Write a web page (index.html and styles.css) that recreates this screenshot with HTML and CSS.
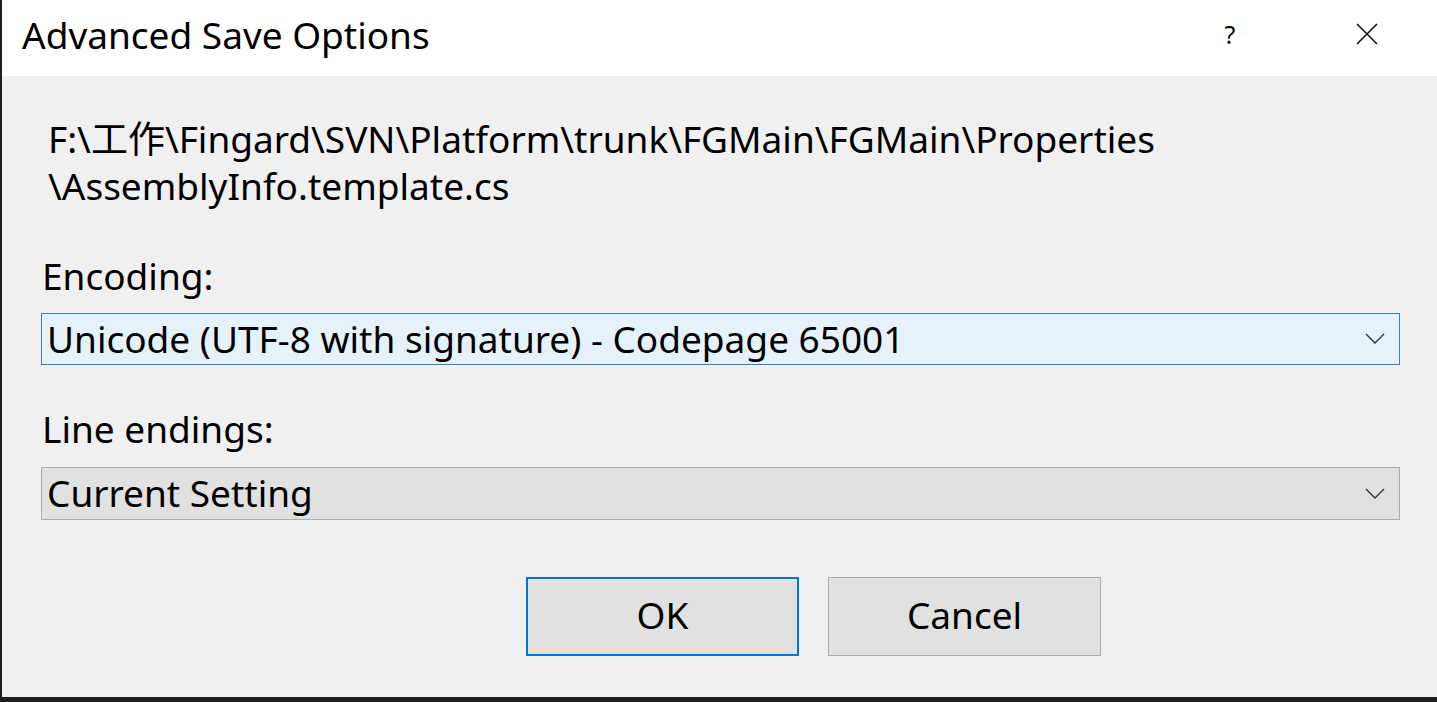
FILE: index.html
```html
<!DOCTYPE html>
<html lang="en">
<head>
    <meta charset="UTF-8">
    <title>Advanced Save Options</title>
    <link rel="stylesheet" href="styles.css">
</head>
<body>

    <div class="dialog">
        <div class="titlebar">
            <span class="title">Advanced Save Options</span>
            <span class="help">?</span>
            <span class="close">
                <svg width="22" height="22" viewBox="0 0 22 22"><path d="M1 1 L21 21 M21 1 L1 21" stroke="#111" stroke-width="1.6" fill="none"/></svg>
            </span>
        </div>

        <div class="content">
            <p class="path">F:\工作\Fingard\SVN\Platform\trunk\FGMain\FGMain\Properties<br>\AssemblyInfo.template.cs</p>

            <label class="field-label">Encoding:</label>
            <div class="combo focused">
                <span>Unicode (UTF-8 with signature) - Codepage 65001</span>
                <svg class="chevron" width="20" height="12" viewBox="0 0 20 12"><path d="M1 1 L10 10 L19 1" stroke="#333" stroke-width="1.4" fill="none"/></svg>
            </div>

            <label class="field-label second">Line endings:</label>
            <div class="combo">
                <span>Current Setting</span>
                <svg class="chevron" width="20" height="12" viewBox="0 0 20 12"><path d="M1 1 L10 10 L19 1" stroke="#333" stroke-width="1.4" fill="none"/></svg>
            </div>

            <div class="buttons">
                <button class="btn default">OK</button>
                <button class="btn">Cancel</button>
            </div>
        </div>
    </div>

</body>
</html>
```

FILE: styles.css
```css
html, body {
    margin: 0;
    padding: 0;
    height: 100%;
    overflow: hidden;
}
body {
    background-color: #1e1e1e;
    font-family: "Noto Sans", "Noto Sans CJK SC", sans-serif;
    color: #000;
    padding-left: 2px;
}
.dialog {
    height: 697px;
    background-color: #f0f0f0;
    display: flex;
    flex-direction: column;
}
.titlebar {
    height: 76px;
    flex-shrink: 0;
    background-color: #fff;
    display: flex;
    align-items: center;
    font-size: 37px;
}
.title {
    margin-left: 20px;
    flex: 1;
    padding-bottom: 8px;
}
.help {
    font-size: 25px;
    width: 30px;
    text-align: center;
    margin-right: 111px;
    padding-bottom: 8px;
}
.close {
    display: flex;
    margin-right: 59px;
    padding-bottom: 8px;
}
.content {
    padding: 0 37px 0 39px;
    font-size: 37px;
}
.path {
    margin: 39px 0 0 7px;
    line-height: 47px;
}
.field-label {
    display: block;
    margin: 47px 0 0 1px;
    line-height: 40px;
}
.field-label.second {
    margin-top: 44px;
}
.combo {
    margin-top: 17px;
    height: 50px;
    border: 1px solid #adadad;
    background-color: #e1e1e1;
    display: flex;
    align-items: center;
    padding: 0 14px 0 5px;
}
.combo span {
    flex: 1;
    padding-bottom: 2px;
}
.combo.focused {
    border-color: #3c7fb1;
    background-color: #e5f1fb;
}
.field-label.second + .combo {
    margin-top: 18px;
    height: 51px;
}
.buttons {
    display: flex;
    gap: 29px;
    margin: 57px 0 0 485px;
}
.btn {
    width: 273px;
    height: 79px;
    border: 1px solid #adadad;
    background-color: #e1e1e1;
    font-family: inherit;
    font-size: 37px;
    color: #000;
    padding: 0 0 4px 0;
}
.btn.default {
    border: 2px solid #0078d7;
}
```
